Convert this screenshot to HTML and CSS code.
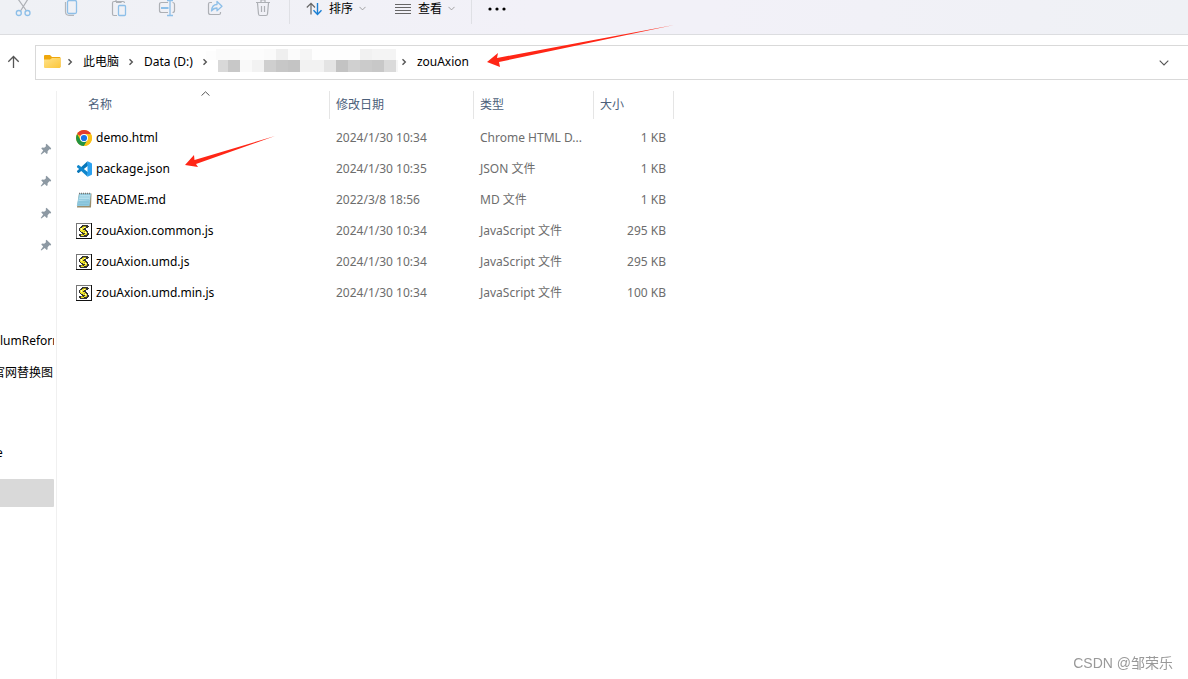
FILE: index.html
```html
<!DOCTYPE html>
<html lang="zh-CN">
<head>
<meta charset="utf-8">
<title>zouAxion</title>
<link rel="stylesheet" href="styles.css">
</head>
<body>
<svg class="defs" width="0" height="0" aria-hidden="true">
  <symbol id="right" viewBox="0 0 6 8"><path d="M1.5 1.2 4.3 4 1.5 6.8" fill="none" stroke="#555" stroke-width="1.4"/></symbol>
  <symbol id="down" viewBox="0 0 10 6"><path d="M.7.7 5 5 9.300.7" fill="none" stroke="currentColor" stroke-width="1.1"/></symbol>
  <symbol id="pin" viewBox="0 0 12 12"><path d="M6.500.8 11.200 5.300 10.600 6.400 9.300 6.300 7.600 8.300 7.600 10.200 6.700 10.900 4.700 8.900 1.300 11.500.7 10.900 3.200 7.500 1.300 5.400 2 4.600 4.200 4.800 6 3.200 5.700 1.700z" fill="#8d99a3"/></symbol>
  <symbol id="script" viewBox="0 0 16 16">
    <path d="M0 0h16v16H0z" fill="#111"/><path d="M0 0h15v1H1v14H0z" fill="#777"/><path d="M1 1h14v14H1z" fill="#fff"/>
    <path d="M6 2h6v1h1v1h-1v1h-2v2h1v1h1v2h1v2h-1v1h-1v1H4v-1H3v-2h3v-1H5V9H4V8H3V5h1V4h1V3h1z" fill="#333"/>
    <path d="M6 4h4v1H8v1H7v1h2v1h1v1h1v2h-1v1H8v1H5v-1h3v-1h1v-1H7V9H5V8H4V5h2z" fill="#efe52a"/>
    <path d="M7 3h3v1H7zM5 11h2v1H5zM8 8h1v1H8zM10 11h1v1h-1z" fill="#a89c10"/><path d="M5 5h1v2H5zM8 4h1v1H8zM9 9h1v1H9z" fill="#fffbc0"/>
  </symbol>
</svg>

<header class="toolbar">
  <div class="actions">
    <button aria-label="剪切"><svg width="22" height="17" viewBox="0 0 22 17" fill="none"><path d="M5-1 13.600 11M15-1 7.500 11" stroke="#adb0b5" stroke-width="1.2"/><circle cx="5.800" cy="13" r="2.500" stroke="#8dbfe8" stroke-width="1.300"/><circle cx="14.500" cy="13" r="2.500" stroke="#8dbfe8" stroke-width="1.300"/></svg></button>
    <button aria-label="复制"><svg width="22" height="17" viewBox="0 0 22 17" fill="none"><path d="M4.500 2v9.500c0 2.400 1.200 3.800 3.500 3.800h5" stroke="#b4b7bb" stroke-width="1.200"/><rect x="6.500" y=".5" width="9" height="13" rx="1.500" stroke="#8dbfe8" stroke-width="1.300"/></svg></button>
    <button aria-label="粘贴"><svg width="22" height="17" viewBox="0 0 22 17" fill="none"><path d="M8 15.500H5q-1.500 0-1.500-1.500V3Q3.500 1.500 5 1.500h9q1.500 0 1.500 1.500M7 1V-1M12 1v1.500H7" stroke="#adb0b5" stroke-width="1.200"/><rect x="9.500" y="5.500" width="7" height="10" rx="1" stroke="#8dbfe8" stroke-width="1.300"/></svg></button>
    <button aria-label="重命名"><svg width="22" height="17" viewBox="0 0 22 17" fill="none"><path d="M11 2.500H4.500Q2.500 2.500 2.500 4.500v6q0 2 2 2H11M15.500 2.500q2 0 2 2v6q0 2-2 2" stroke="#adb0b5" stroke-width="1.200"/><path d="M4 8h7.500" stroke="#8dbfe8" stroke-width="2"/><path d="M13 0v15.500M10 .500h6M10 15.500h6" stroke="#8dbfe8" stroke-width="1.300"/></svg></button>
    <button aria-label="共享"><svg width="22" height="17" viewBox="0 0 22 17" fill="none"><path d="M7 2.500H5Q3.500 2.500 3.500 4v8.500Q3.500 14.500 5.500 14.500h8.500q1.500 0 1.500-1.500v-1" stroke="#adb0b5" stroke-width="1.200"/><path d="M6.500 11Q7 4.500 12 4.500V1.500l5 4.800-5 4.500V8Q8.500 8 6.500 11z" stroke="#8dbfe8" stroke-width="1.300" stroke-linejoin="round"/></svg></button>
    <button aria-label="删除"><svg width="22" height="17" viewBox="0 0 22 17" fill="none"><path d="M3 2.500h14M8 2V0h4v2M4.500 3l1 11q.200 1.500 1.500 1.500h6q1.300 0 1.500-1.500l1-11M8.500 6v6M11.500 6v6" stroke="#adb0b5" stroke-width="1.200"/></svg></button>
  </div>
  <button class="menu sort"><svg width="17" height="16" viewBox="0 0 17 16" fill="none"><path d="M5 13.500V2M.8 6.500 5 2.300l4 4.200" stroke="#666" stroke-width="1.200"/><path d="M11.500 2v11.500M7.500 9.200l4 4.200 4-4.200" stroke="#1a7fd4" stroke-width="1.400"/></svg><span>排序</span><svg class="caret" width="7" height="5"><use href="#down"/></svg></button>
  <button class="menu"><svg width="17" height="16" viewBox="0 0 17 16"><path d="M0 3.500h16M0 6.500h16M0 9.500h16M0 12.500h16" stroke="#666"/></svg><span>查看</span><svg class="caret" width="7" height="5"><use href="#down"/></svg></button>
  <button class="more" aria-label="更多"><svg width="18" height="16"><circle cx="2" cy="9" r="1.600"/><circle cx="9" cy="9" r="1.600"/><circle cx="16" cy="9" r="1.600"/></svg></button>
</header>

<nav class="location" aria-label="路径">
  <button class="up" aria-label="向上"><svg width="13" height="14" viewBox="0 0 13 14" fill="none"><path d="M6.500 13V1.500M1.300 6.700 6.500 1.500l5.200 5.200" stroke="#555" stroke-width="1.300"/></svg></button>
  <div class="address">
    <svg class="folder" width="17" height="14" viewBox="0 0 17 14"><defs><linearGradient id="fold" x2="1" y2="1"><stop stop-color="#ffe28a"/><stop offset="1" stop-color="#fbc63a"/></linearGradient></defs><path d="M1 0h5l2 2h7.500q1 0 1 1v9H0V1q0-1 1-1z" fill="#efa70c"/><path d="M0 4.500h6L8 3h8.500v9q0 1-1 1H1q-1 0-1-1z" fill="url(#fold)"/></svg>
    <svg class="sep" width="6" height="8"><use href="#right"/></svg>
    <button>此电脑</button>
    <svg class="sep" width="6" height="8"><use href="#right"/></svg>
    <button>Data (D:)</button>
    <svg class="sep" width="6" height="8"><use href="#right"/></svg>
    <svg class="mosaic" width="192" height="24" viewBox="0 0 192 24" shape-rendering="crispEdges">
      <path d="M0 3h10v9H0z" fill="#fdfdfd"/><path d="M10 1h24v11H10z" fill="#fafafa"/><path d="M34 1h24v11H34z" fill="#fcfcfc"/><path d="M58 1h12v11H58z" fill="#fafafa"/><path d="M70 1h12v11H70z" fill="#efefef"/><path d="M82 1h12v11H82z" fill="#fbfbfb"/><path d="M94 1h12v11H94z" fill="#f5f5f5"/><path d="M106 1h48v11h-48z" fill="#fefefe"/><path d="M154 1h12v11h-12z" fill="#f1f1f1"/><path d="M166 1h24v11h-24z" fill="#f4f4f4"/>
      <path d="M12 12h10v12H12z" fill="#d9d9d9"/><path d="M22 12h12v12H22z" fill="#c8c8c8"/><path d="M34 12h12v12H34z" fill="#f9f9f9"/><path d="M46 12h12v12H46z" fill="#f2f2f2"/><path d="M58 12h12v12H58z" fill="#cfcfcf"/><path d="M70 12h12v12H70z" fill="#c7c7c7"/><path d="M82 12h12v12H82z" fill="#c4c4c4"/><path d="M94 12h24v12H94z" fill="#f2f2f2"/><path d="M118 12h12v12h-12z" fill="#e4e4e4"/><path d="M130 12h12v12h-12z" fill="#c3c3c3"/><path d="M142 12h12v12h-12z" fill="#d0d0d0"/><path d="M154 12h12v12h-12z" fill="#cbcbcb"/><path d="M166 12h12v12h-12z" fill="#c8c8c8"/><path d="M178 12h12v12h-12z" fill="#dadada"/><path d="M190 12h2v12h-2z" fill="#f6f6f6"/>
    </svg>
    <svg class="sep" width="6" height="8"><use href="#right"/></svg>
    <button>zouAxion</button>
    <button class="history" aria-label="历史记录"><svg width="10" height="6"><use href="#down"/></svg></button>
  </div>
</nav>

<main class="body">
  <aside class="sidebar">
    <ul>
      <li class="pinned"><svg width="12" height="12"><use href="#pin"/></svg></li>
      <li class="pinned"><svg width="12" height="12"><use href="#pin"/></svg></li>
      <li class="pinned"><svg width="12" height="12"><use href="#pin"/></svg></li>
      <li class="pinned"><svg width="12" height="12"><use href="#pin"/></svg></li>
      <li></li>
      <li></li>
      <li>lumReform</li>
      <li class="cut">官网替换图</li>
      <li></li>
      <li class="group">e</li>
      <li class="selected"></li>
    </ul>
  </aside>
  <table class="files">
    <colgroup><col class="c-name"><col class="c-date"><col class="c-type"><col class="c-size"></colgroup>
    <thead><tr><th class="name">名称<svg class="asc" width="9" height="5" viewBox="0 0 9 5"><path d="M.500 4.600 4.500.8l4 3.800" fill="none" stroke="#555"/></svg></th><th>修改日期</th><th>类型</th><th>大小</th></tr></thead>
    <tbody>
      <tr><td><div class="file"><svg width="16" height="16" viewBox="0 0 16 16"><circle cx="8" cy="8" r="8" fill="#fbc116"/><path d="M8 8 1.100 4A8 8 0 0 1 14.900 4z" fill="#e33b2e"/><path d="M1.100 4A8 8 0 0 0 8 16l3.500-6L8 8 4.500 10z" fill="#229342"/><path d="M14.900 4H8l3.500 6L8 16A8 8 0 0 0 14.900 4z" fill="#fbc116"/><circle cx="8" cy="8" r="4" fill="#fff"/><circle cx="8" cy="8" r="3.100" fill="#1a73e8"/></svg>demo.html</div></td><td>2024/1/30 10:34</td><td>Chrome HTML D...</td><td>1 KB</td></tr>
      <tr><td><div class="file"><svg width="16" height="16" viewBox="0 0 16 16"><path d="M11.500.3 1.200 9.800q-.600.600 0 1.200l.700.700q.500.400 1.100 0L12 4.800z" fill="#0877b9"/><path d="M11.500 15.700 1.200 6.200q-.600-.600 0-1.200l.700-.700q.500-.400 1.100 0L12 11.200z" fill="#0f86cc"/><path d="M11.500.2 15.300 2q.700.400.700 1.100v9.800q0 .700-.700 1.100l-3.800 1.800z" fill="#2aa1ef"/></svg>package.json</div></td><td>2024/1/30 10:35</td><td>JSON 文件</td><td>1 KB</td></tr>
      <tr><td><div class="file"><svg width="16" height="16" viewBox="0 0 16 16"><path d="M3 1.500h12.500L15 15.500H1z" fill="#9a8d6c"/><path d="M3 1.500h12L13.500 14H.8z" fill="#8fc9df"/><path d="M4 3h10.300L13.500 8 2.500 9z" fill="#b5dfed"/><path d="M3.500 5h10M3 7.500h10M2.500 10h10.500M2 12.500h10.500" stroke="#7ab8d0" stroke-width=".5"/><path d="M3 1.500h12" stroke="#777" stroke-width="1.500" stroke-dasharray="1 1"/></svg>README.md</div></td><td>2022/3/8 18:56</td><td>MD 文件</td><td>1 KB</td></tr>
      <tr><td><div class="file"><svg width="16" height="16"><use href="#script"/></svg>zouAxion.common.js</div></td><td>2024/1/30 10:34</td><td>JavaScript 文件</td><td>295 KB</td></tr>
      <tr><td><div class="file"><svg width="16" height="16"><use href="#script"/></svg>zouAxion.umd.js</div></td><td>2024/1/30 10:34</td><td>JavaScript 文件</td><td>295 KB</td></tr>
      <tr><td><div class="file"><svg width="16" height="16"><use href="#script"/></svg>zouAxion.umd.min.js</div></td><td>2024/1/30 10:34</td><td>JavaScript 文件</td><td>100 KB</td></tr>
    </tbody>
  </table>
</main>

<svg class="arrow arrow-path" width="188" height="42" viewBox="0 0 188 42" fill="#ff2616"><path d="M0 37 11 28 10 33 187 0 12 37 13 42z"/></svg>
<svg class="arrow arrow-file" width="90" height="32" viewBox="0 0 90 32" fill="#ff2616"><path d="M0 29 9 19 9.500 24 90 0 11 28 13 31z"/></svg>
<p class="watermark">CSDN @邹荣乐</p>
</body>
</html>
```
FILE: styles.css
```css
* { box-sizing: border-box; }
body {
  margin: 0;
  min-height: 100vh;
  display: flex;
  flex-direction: column;
  overflow: hidden;
  background: #fff;
  color: #000;
  font: 12px/16px "Noto Sans", "Noto Sans CJK SC", sans-serif;
}
.defs { position: absolute; }
svg { display: block; flex: none; }
button { display: flex; align-items: center; border: 0; padding: 0; background: none; color: inherit; font: inherit; }
ul { list-style: none; margin: 0; padding: 0; }

.toolbar {
  display: flex;
  align-items: flex-start;
  height: 35px;
  border-bottom: 1px solid #dcdde0;
  background: linear-gradient(90deg, #eff1f5, #f2f1f8 45%, #f2f1f8 60%, #eff1f5);
}
.actions { display: flex; padding-right: 1px; border-right: 1px solid #dfe0e5; height: 24px; }
.actions button { width: 48px; height: 17px; padding-left: 13px; }
.menu { height: 17px; margin-left: 29px; gap: 6px; }
.menu.sort { margin-left: 16px; }
.menu .caret { color: #888; }
.more { height: 24px; margin-left: 16px; padding-left: 16px; border-left: 1px solid #dfe0e5; align-items: flex-start; }

.location { display: flex; margin-top: 10px; }
.up { width: 35px; padding: 0 0 2px 7px; }
.address { flex: 1; display: flex; align-items: center; height: 35px; padding: 0 19px 2px 8px; border: 1px solid #d9d9d9; border-right: 0; }
.folder { margin-right: -3px; }
.sep { margin: 0 10px 0 9px; }
.mosaic { align-self: flex-start; margin: 2px 3px 0 -12px; }
.mosaic + .sep { margin-left: 0; }
.history { margin-left: auto; padding-top: 2px; color: #555; }

.body { flex: 1; display: flex; margin-top: 11px; }
.sidebar { width: 57px; padding: 42px 2px 0 0; border-right: 1px solid #f0f0f0; }
.sidebar li { height: 32px; display: flex; align-items: center; overflow: hidden; white-space: nowrap; }
.sidebar .pinned { justify-content: flex-end; padding-right: 2px; }
.sidebar .cut { text-indent: -7px; }
.sidebar .group { margin: 16px 0 10px; text-indent: -4px; }
.sidebar .selected { height: 28px; background: #d9d9d9; border-radius: 0 1px 1px 0; }

.files { align-self: flex-start; width: 617px; table-layout: fixed; border-collapse: separate; border-spacing: 0; }
.c-name { width: 273px; }
.c-date { width: 144px; }
.c-type { width: 120px; }
.c-size { width: 80px; }
th { height: 28px; padding: 0 6px; border-right: 1px solid #e5e5e5; color: #4c607a; font-weight: 400; text-align: left; }
th.name { padding-left: 31px; position: relative; }
.asc { position: absolute; top: 0; left: 144px; }
tbody tr:first-child td { border-top: 3px solid transparent; height: 34px; }
td { height: 31px; padding: 0 6px; color: #6d6d6d; white-space: nowrap; }
td:last-child { text-align: right; padding-right: 8px; }
td:first-child { padding-left: 19px; color: #000; }
.file { display: flex; align-items: center; gap: 4px; }

.arrow { position: absolute; pointer-events: none; }
.arrow-path { left: 487px; top: 25px; }
.arrow-file { left: 185px; top: 136px; }
.watermark { position: fixed; right: 15px; bottom: 6px; margin: 0; color: #999; font: 14px/20px "Liberation Sans", "Noto Sans CJK SC", sans-serif; }
```
